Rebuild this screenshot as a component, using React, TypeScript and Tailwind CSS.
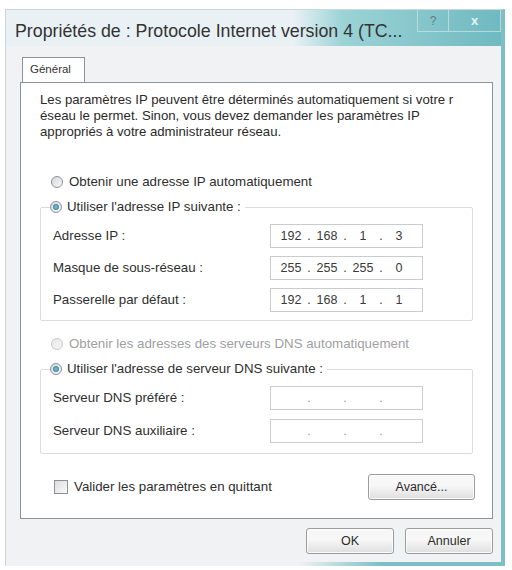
import React from "react";

const font = "font-['Liberation_Sans',Arial,sans-serif]";

function Radio({ checked, disabled }: { checked?: boolean; disabled?: boolean }) {
  return (
    <span
      className={`flex h-[12px] w-[12px] shrink-0 items-center justify-center rounded-full border bg-gradient-to-br ${
        disabled ? "border-[#c8c8c8] from-[#e8e8e8] to-[#f6f6f6]" : "border-[#8c9095] from-[#d9d9d9] to-[#f8f8f8]"
      }`}
    >
      {checked && <span className="h-[6px] w-[6px] rounded-full bg-[radial-gradient(circle,#7fc3d8,#2a6f8c)]" />}
    </span>
  );
}

function IpField({ value }: { value?: string[] }) {
  const parts = value ?? ["", "", "", ""];
  return (
    <div className="flex h-[24px] w-[153px] items-center border border-[#c9cdd2] bg-white pl-[8px] text-[12.5px] text-[#3a3a3a]">
      {parts.map((p, i) => (
        <React.Fragment key={i}>
          <span className="w-[24px] text-center">{p}</span>
          {i < 3 && <span className={`w-[12px] text-center ${p === "" ? "text-[#9a9a9a]" : ""}`}>.</span>}
        </React.Fragment>
      ))}
    </div>
  );
}

function Row({ label, value }: { label: string; value?: string[] }) {
  return (
    <div className="flex items-center pl-[12px]">
      <span className="w-[217px]">{label}</span>
      <IpField value={value} />
    </div>
  );
}

function Button({ children, w }: { children: React.ReactNode; w: string }) {
  return (
    <button
      className={`${w} flex h-[26px] items-center justify-center rounded-[3px] border border-[#9c9c9c] bg-gradient-to-b from-[#f7f7f7] from-45% to-[#dedede] text-[12.5px] text-[#2b2b2b] shadow-[inset_0_0_0_1px_#fbfbfb]`}
    >
      {children}
    </button>
  );
}

export default function App() {
  return (
    <div className={`${font} h-[570px] w-[512px] overflow-hidden bg-white pl-[5px] pt-[9px] text-[13.3px] text-[#2e2e2e]`}>
      <div className="flex h-[557px] w-[500px] flex-col border-l border-t border-[#c8d8e2] border-r-[4px] border-r-[#7cbfc5] bg-[#f0f2f3]">
        {/* title bar */}
        <div className="flex h-[36px] items-start bg-[linear-gradient(to_right,#eaf1f5_58%,#9bd3d6_68%,#6fb9c0)]">
          <span className="whitespace-nowrap pl-[9px] pt-[11px] text-[17.8px] leading-[20px] text-[#333]">
            Propriétés de : Protocole Internet version 4 (TC...
          </span>
          <div className="ml-auto flex h-[22px]">
            <span className="flex w-[32px] items-center justify-center border border-t-0 border-[#cfe6e8]/70 text-[12px] text-[#5d7f86]">
              ?
            </span>
            <span className="flex w-[52px] items-center justify-center border border-l-0 border-t-0 border-[#cfe6e8]/70 text-[13px] font-bold text-[#e8f3f4]">
              x
            </span>
          </div>
        </div>

        <div className="flex flex-1 flex-col pl-[14px] pt-[11px]">
          {/* tab */}
          <div className="ml-[2px] flex h-[25px] w-[63px] items-center border border-b-0 border-[#8e9298] bg-white pl-[7px] text-[11.5px] text-[#333]">
            Général
          </div>

          {/* panel */}
          <div className="flex h-[437px] w-[473px] flex-col border border-[#8e9298] bg-white px-[19px] pt-[9px]">
            <p className="whitespace-nowrap pl-[-2px] text-[13.2px] leading-[16px] text-[#2a2a2a]">
              Les paramètres IP peuvent être déterminés automatiquement si votre r<br />
              éseau le permet. Sinon, vous devez demander les paramètres IP
              <br />
              appropriés à votre administrateur réseau.
            </p>

            <div className="mt-[32px] flex h-[20px] items-center gap-[6px] pl-[11px]">
              <Radio />
              <span>Obtenir une adresse IP automatiquement</span>
            </div>

            <div className="mt-[15px] flex flex-col rounded-[2px] border border-[#dadde0] pb-[8px]">
              <div className="-mt-[11px] ml-[9px] flex h-[20px] items-center gap-[5px] self-start bg-white pr-[4px]">
                <Radio checked />
                <span>Utiliser l'adresse IP suivante :</span>
              </div>
              <div className="mt-[7px] flex flex-col gap-[8px]">
                <Row label="Adresse IP :" value={["192", "168", "1", "3"]} />
                <Row label="Masque de sous-réseau :" value={["255", "255", "255", "0"]} />
                <Row label="Passerelle par défaut :" value={["192", "168", "1", "1"]} />
              </div>
            </div>

            <div className="mt-[13px] flex h-[20px] items-center gap-[6px] pl-[11px] text-[#a0a0a0]">
              <Radio disabled />
              <span>Obtenir les adresses des serveurs DNS automatiquement</span>
            </div>

            <div className="mt-[15px] flex flex-col rounded-[2px] border border-[#dadde0] pb-[10px]">
              <div className="-mt-[11px] ml-[9px] flex h-[20px] items-center gap-[5px] self-start bg-white pr-[4px]">
                <Radio checked />
                <span>Utiliser l'adresse de serveur DNS suivante :</span>
              </div>
              <div className="mt-[7px] flex flex-col gap-[9px]">
                <Row label="Serveur DNS préféré :" />
                <Row label="Serveur DNS auxiliaire :" />
              </div>
            </div>

            <div className="mt-[20px] flex items-center">
              <span className="ml-[14px] h-[14px] w-[14px] border border-[#8c9095] bg-gradient-to-br from-[#dcdcdc] to-[#fafafa]" />
              <span className="ml-[6px]">Valider les paramètres en quittant</span>
              <div className="ml-auto mr-[-2px]">
                <Button w="w-[107px]">Avancé...</Button>
              </div>
            </div>
          </div>

          {/* bottom buttons */}
          <div className="mt-[9px] flex w-[473px] justify-end gap-[11px]">
            <Button w="w-[88px]">OK</Button>
            <Button w="w-[88px]">Annuler</Button>
          </div>

          <div className="mt-auto h-[4px] w-full bg-[linear-gradient(to_right,transparent_58%,#7cbfc5_75%)]" />
        </div>
      </div>
    </div>
  );
}
